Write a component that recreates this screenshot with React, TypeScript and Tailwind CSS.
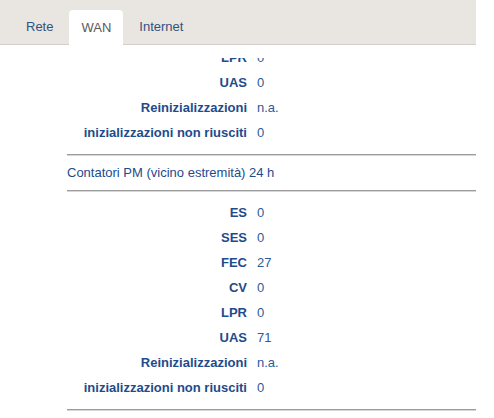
import React from "react";

type Row = { label: string; value: string };

const nearEndTop: Row[] = [
    {label: "LPR", value: "0"},
    {label: "UAS", value: "0"},
    {label: "Reinizializzazioni", value: "n.a."},
    {label: "inizializzazioni non riusciti", value: "0"},
];

const nearEnd24h: Row[] = [
    {label: "ES", value: "0"},
    {label: "SES", value: "0"},
    {label: "FEC", value: "27"},
    {label: "CV", value: "0"},
    {label: "LPR", value: "0"},
    {label: "UAS", value: "71"},
    {label: "Reinizializzazioni", value: "n.a."},
    {label: "inizializzazioni non riusciti", value: "0"},
];

const tabs = ["Rete", "WAN", "Internet"];

const Rule = () => (
    <div className="h-[2px] border-t border-[#9c9c9c] bg-[#d6d6d6]"/>
);

const Rows: React.FC<{ rows: Row[] }> = ({rows}) => (
    <div className="flex flex-col">
        {rows.map((r, i) => (
            <div key={i} className="flex h-[25px] items-center text-[13px]">
                <span className="w-[180px] text-right font-bold text-[#1d4b8b]">{r.label}</span>
                <span className="ml-[10px] text-[#2c5b9b]">{r.value}</span>
            </div>
        ))}
    </div>
);

export default function App() {
    return (
        <div className="w-[494px] h-[418px] bg-white overflow-hidden" style={{fontFamily: '"Liberation Sans", Arial, sans-serif'}}>
            <div className="w-[476px] h-[45px] bg-[#e9e5e1] border-b border-[#d3cfcb] flex items-end pl-[14px] gap-1">
                {tabs.map(t => (
                    <div
                        key={t}
                        className={t === "WAN"
                            ? "h-[35px] -mb-px px-3 flex items-center bg-white rounded-t-[4px] text-[13px] text-[#5a5a5a]"
                            : "h-[35px] px-3 flex items-center text-[13px] text-[#2f5380]"}
                    >
                        {t}
                    </div>
                ))}
            </div>
            <div className="w-[476px] pt-[13px]">
                <div className="h-[359px] overflow-hidden">
                    <div className="-mt-[13px] pl-[67px]">
                        <Rows rows={nearEndTop}/>
                        <div className="mt-[9px]"><Rule/></div>
                        <div className="h-[34px] flex items-center text-[13px] text-[#1d4b8b]">
                            Contatori PM (vicino estremità) 24 h
                        </div>
                        <Rule/>
                        <div className="mt-[8px]"><Rows rows={nearEnd24h}/></div>
                        <div className="mt-[9px]"><Rule/></div>
                    </div>
                </div>
            </div>
        </div>
    );
}
